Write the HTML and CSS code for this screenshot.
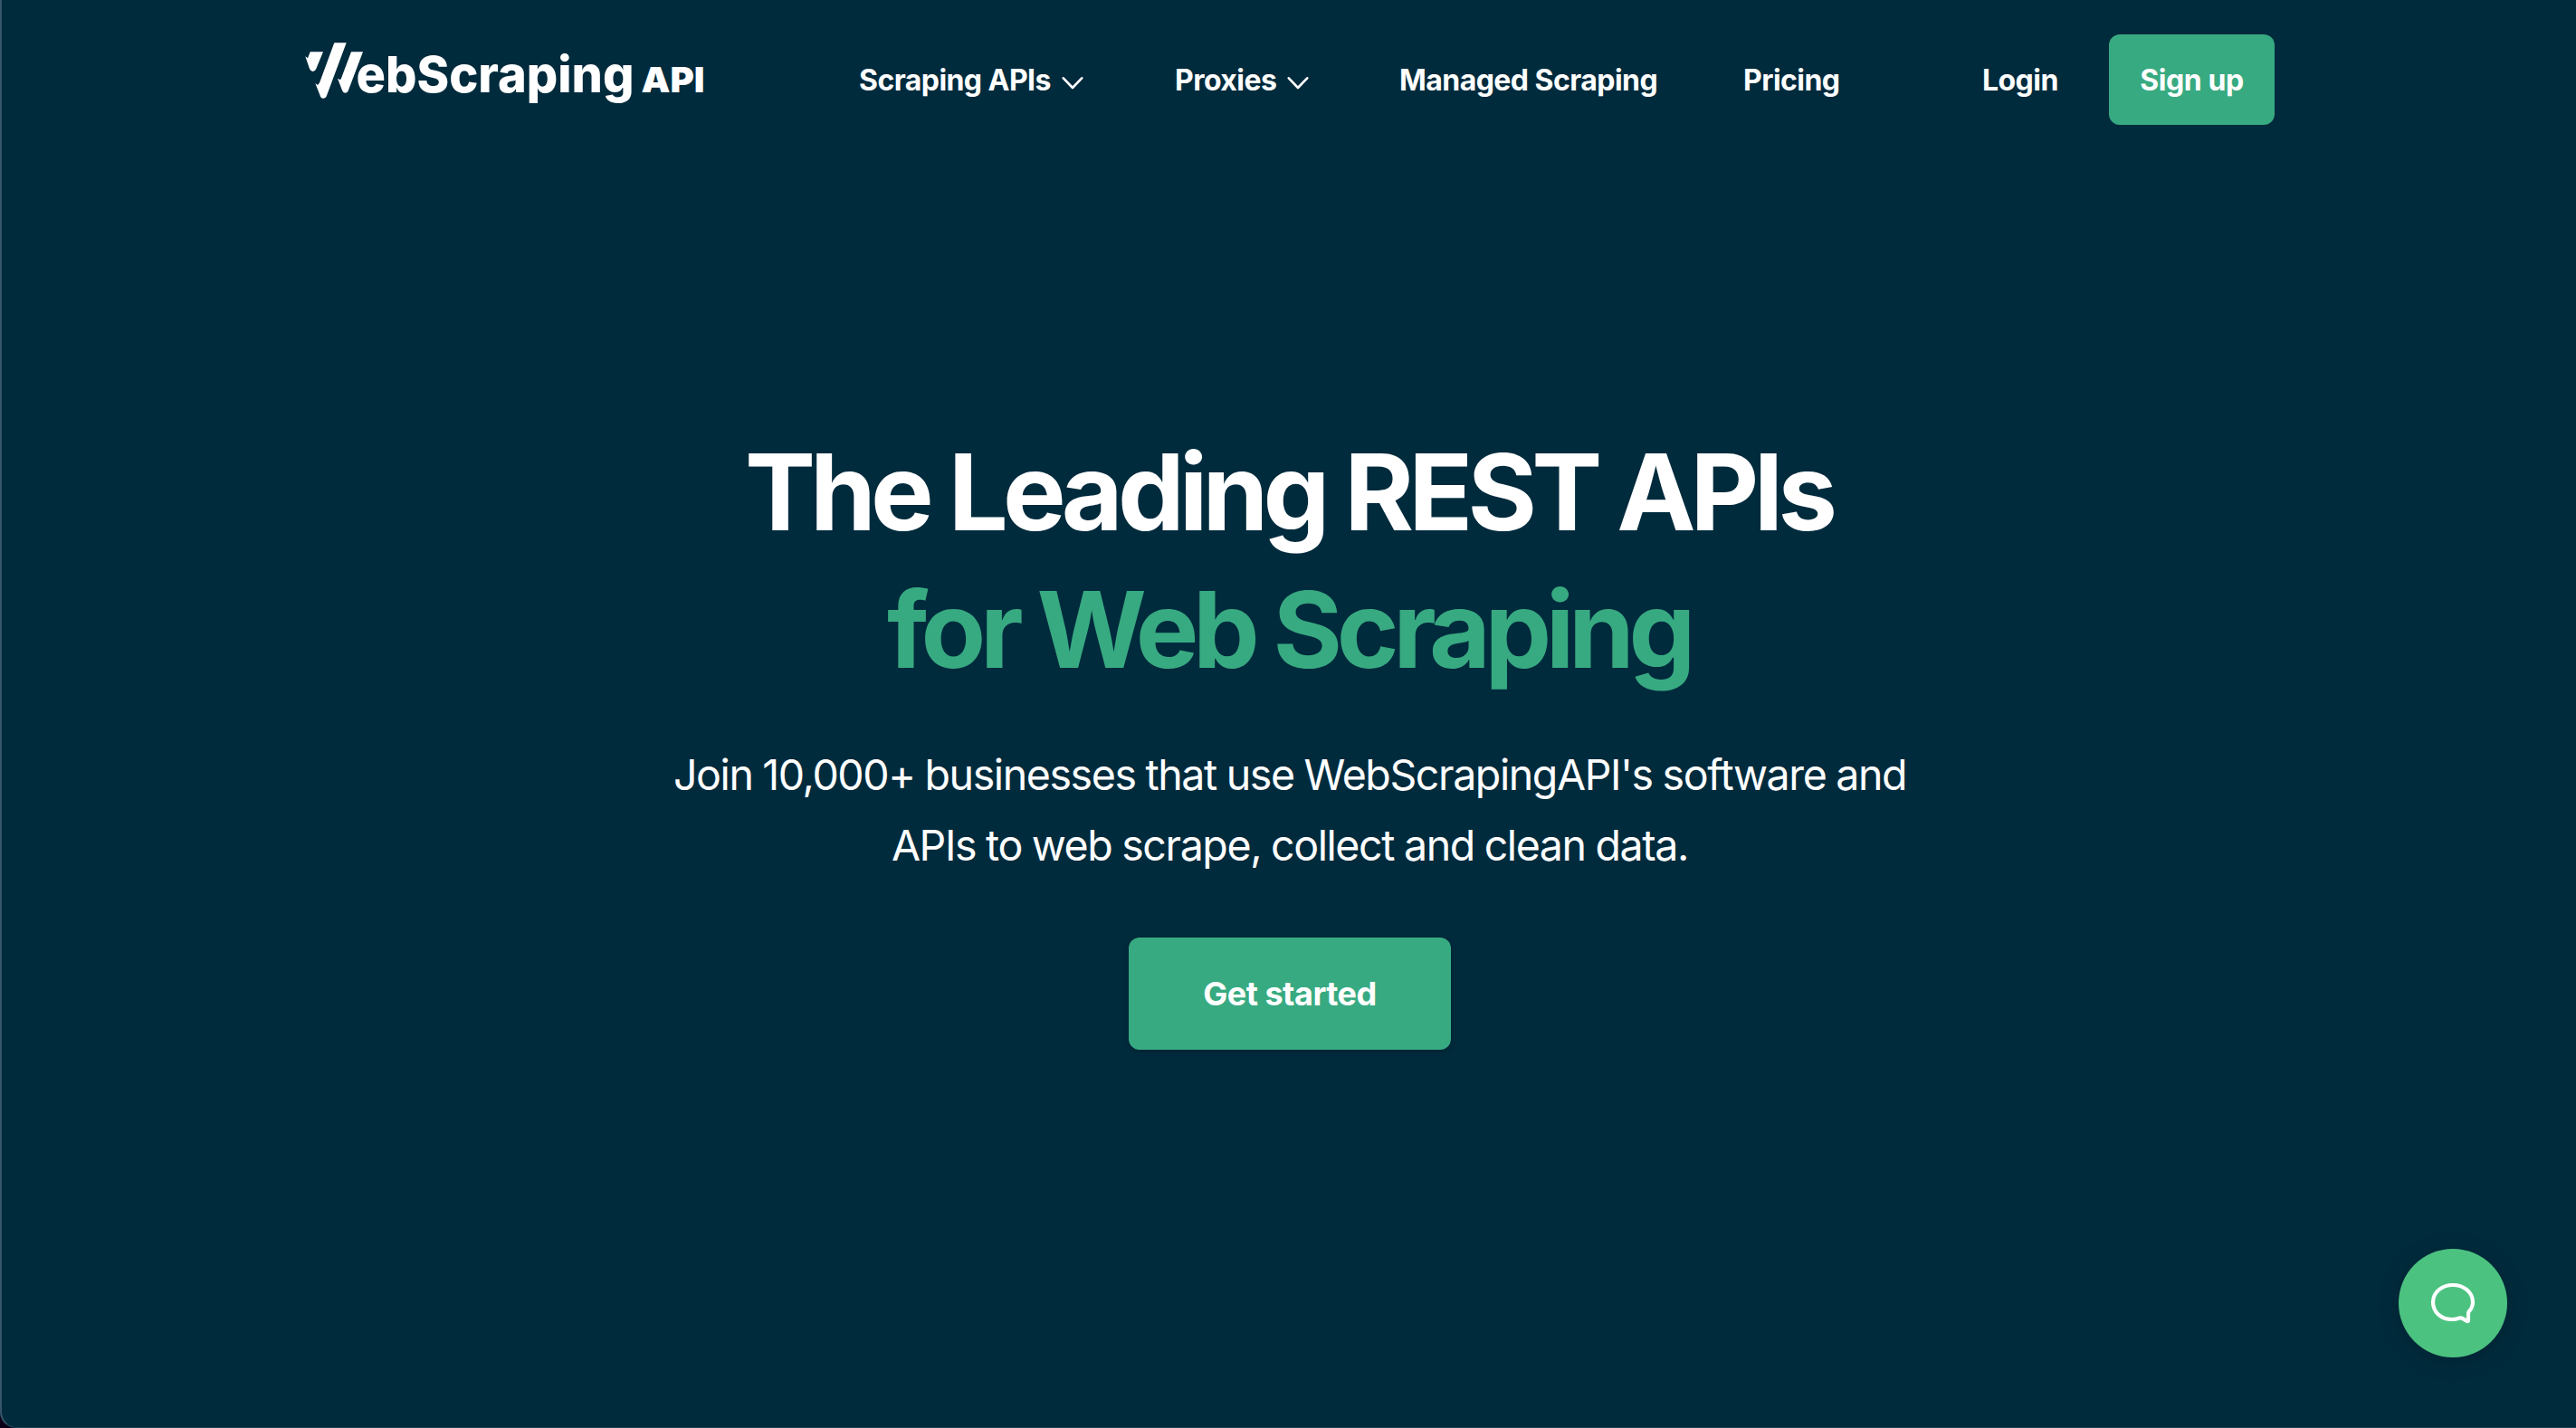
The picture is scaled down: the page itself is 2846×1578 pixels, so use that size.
FILE: index.html
```
<!DOCTYPE html>
<html lang="en">
<head>
  <meta charset="UTF-8">
  <meta name="viewport" content="width=device-width, initial-scale=1.0">
  <title>WebScrapingAPI</title>
  <link rel="stylesheet" href="styles.css">
</head>
<body>
  <div class="page">
    <header class="header">
      <a class="logo" href="#">
        <svg width="444" height="76" viewBox="0 0 444 76" fill="#fff">
          <path d="M1.3 18.3 L4 20.3 L6.7 13.3 H21 L13.3 32 Q12 35 9.7 35 Q7.3 35 6 32 Z"/>
          <path d="M33.3 3.3 H46.7 L25 61.5 Q23.8 64.7 21 64.7 Q18.6 64.7 17.6 61.5 L12.3 48 L15 50 L17 47.5 Z"/>
          <path d="M52 13.3 H65 L49 55.5 Q47.8 58.7 45.3 58.7 Q43 58.7 42 55.8 L37 42.7 L40 44.3 L41.2 42 Z"/>
          <text class="logo-name" x="57.5" y="57.9" textLength="307" lengthAdjust="spacingAndGlyphs">ebScraping</text>
          <text class="logo-api" x="372.5" y="57.9" textLength="70" lengthAdjust="spacingAndGlyphs">API</text>
        </svg>
      </a>
      <nav class="nav">
        <a href="#">Scraping APIs
          <svg class="chevron" width="24" height="16" viewBox="0 0 24 16"><path d="M1.8 2.3 L12 13 L22.2 2.3"/></svg>
        </a>
        <a href="#">Proxies
          <svg class="chevron" width="24" height="16" viewBox="0 0 24 16"><path d="M1.8 2.3 L12 13 L22.2 2.3"/></svg>
        </a>
        <a href="#">Managed Scraping</a>
        <a href="#">Pricing</a>
        <a href="#">Login</a>
        <a class="signup" href="#">Sign up</a>
      </nav>
    </header>

    <main class="hero">
      <h1>The Leading REST APIs<br><span>for Web Scraping</span></h1>
      <p>Join 10,000+ businesses that use WebScrapingAPI's software and<br>APIs to web scrape, collect and clean data.</p>
      <a class="start" href="#">Get started</a>
    </main>

    <button class="chat" aria-label="Open chat">
      <svg width="56" height="52" viewBox="0 0 56 52">
        <path d="M28 6 C38.5 6 50 12.5 50 25 C50 29.5 48.5 32.5 45.5 35.5 C45 36 45 37 45 38.5 V45 Q45 46.5 43.5 45.8 L38 42.6 Q37 42 35.5 42.4 C33 43.3 30.5 44 27 44 C15 44 6 36 6 25 C6 12.5 17.5 6 28 6 Z"/>
      </svg>
    </button>
  </div>
</body>
</html>
```
FILE: styles.css
```
* {
  box-sizing: border-box;
}
body {
  margin: 0;
  background: #0c0018;
  font-family: Inter, "Liberation Sans", sans-serif;
  color: #fff;
}
a {
  color: #fff;
  text-decoration: none;
}
.page {
  height: 1578px;
  background: #002b3d;
  border-left: 2px solid #35566a;
  border-bottom: 1px solid #1d4254;
  border-bottom-left-radius: 18px;
  overflow: hidden;
}
.header {
  display: flex;
  padding: 38px 0 0 334px;
}
.logo {
  width: 613px;
  padding-top: 6px;
}
.logo svg {
  display: block;
  overflow: visible;
}
.logo-name {
  font-size: 55.5px;
  font-weight: 850;
}
.logo-api {
  font-size: 39px;
  font-weight: 900;
}
.nav {
  display: grid;
  grid-template-columns: 349px 248px 380px 264px 140px 183px;
  align-items: center;
  height: 100px;
  font-size: 32px;
  font-weight: 650;
  letter-spacing: -0.55px;
  white-space: nowrap;
}
.chevron {
  margin-left: 5px;
  fill: none;
  stroke: #fff;
  stroke-width: 2.6;
  stroke-linecap: round;
  stroke-linejoin: round;
}
.signup {
  height: 100px;
  line-height: 101px;
  text-align: center;
  letter-spacing: -0.4px;
  background: #38aa81;
  border-radius: 12px;
}
.hero {
  display: flex;
  flex-direction: column;
  align-items: center;
  padding: 330px 0 0 2px;
  text-align: center;
}
h1 {
  margin: 0;
  padding-right: 3px;
  font-size: 117px;
  font-weight: 720;
  line-height: 152px;
  letter-spacing: -5.9px;
}
h1 span {
  color: #38aa81;
  letter-spacing: -6.4px;
}
p {
  margin: 45px 0 0;
  font-size: 46.5px;
  line-height: 78px;
  letter-spacing: -1.4px;
  word-spacing: -0.8px;
}
.start {
  width: 356px;
  height: 124px;
  margin-top: 63px;
  line-height: 125px;
  font-size: 36px;
  font-weight: 650;
  letter-spacing: -0.5px;
  background: #38aa81;
  border-radius: 12px;
  box-shadow: 0 2px 6px rgba(0, 0, 0, 0.2);
}
.chat {
  position: fixed;
  right: 76px;
  bottom: 78px;
  display: flex;
  align-items: center;
  justify-content: center;
  width: 120px;
  height: 120px;
  padding: 0;
  border: none;
  border-radius: 50%;
  background: #4cc280;
  box-shadow: 0 4px 24px rgba(0, 0, 0, 0.2);
}
.chat path {
  fill: none;
  stroke: #fff;
  stroke-width: 4.2;
}
```
